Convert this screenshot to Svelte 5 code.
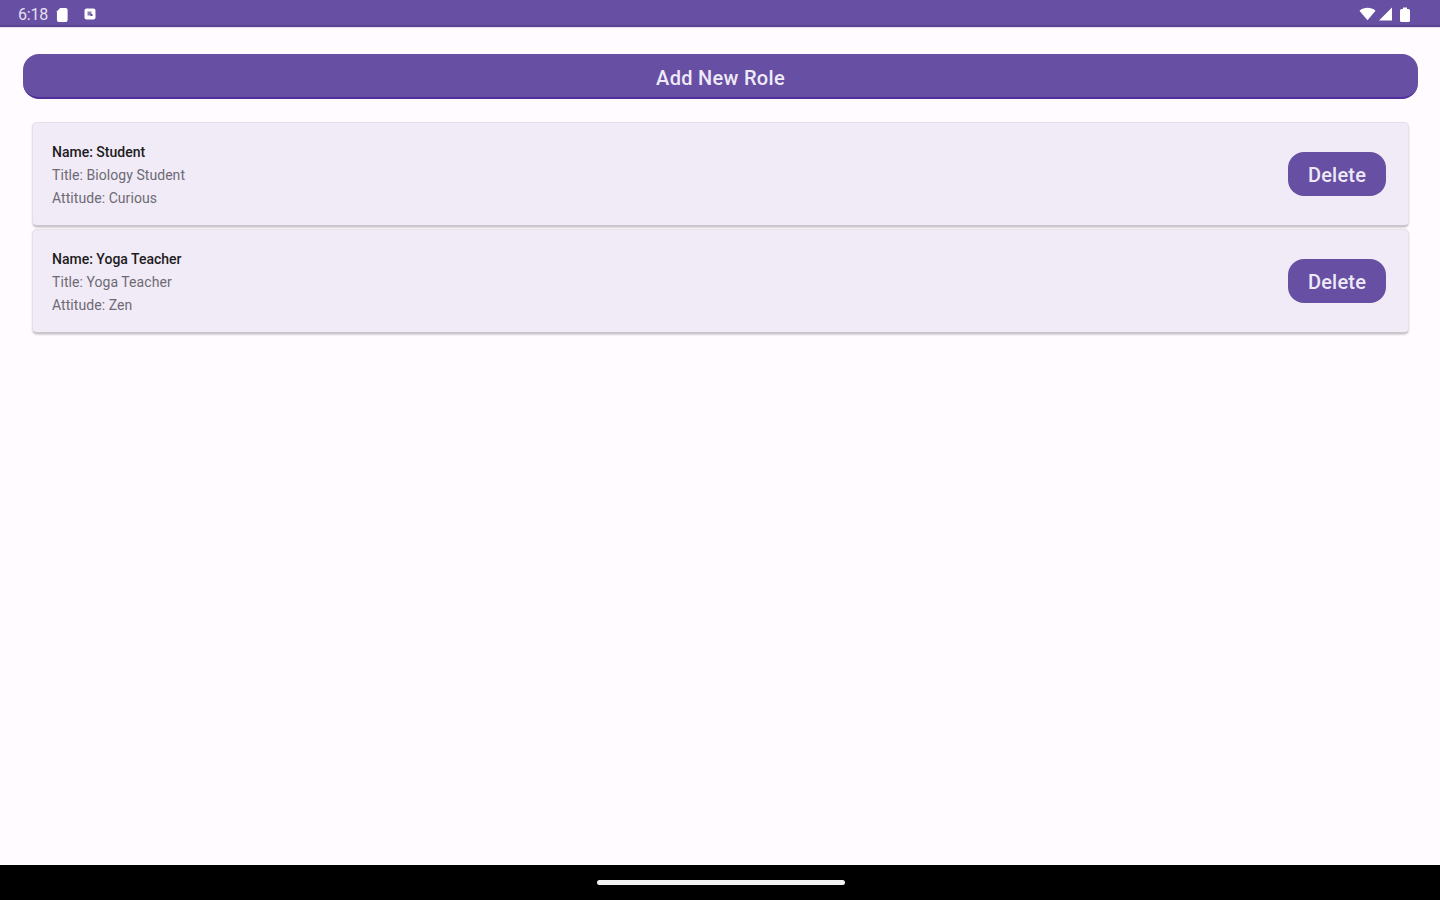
<script lang="ts">
  const roles = [
    { name: 'Student', title: 'Biology Student', attitude: 'Curious' },
    { name: 'Yoga Teacher', title: 'Yoga Teacher', attitude: 'Zen' },
  ]
</script>

<div class="screen">
  <header class="status-bar">
    <div class="status-left">
      <span class="time">6:18</span>
      <svg class="sd" width="13" height="15" viewBox="0 0 14 16">
        <path d="M4.500 1h6a2 2 0 0 1 2 2v11a2 2 0 0 1-2 2h-7.500a2 2 0 0 1-2-2V4.500z" fill="#fff" />
      </svg>
      <svg class="notif" width="12" height="12" viewBox="0 0 12 12">
        <rect x="0.500" y="0.500" width="11" height="11" rx="2" fill="#fff" />
        <rect x="3.500" y="3.500" width="4" height="4" fill="#8d7cb8" />
        <rect x="6.500" y="6" width="2" height="2" fill="#5e4a96" />
      </svg>
    </div>
    <div class="status-right">
      <svg width="17" height="14" viewBox="0 0 18 14">
        <path d="M0.500 3.500C3 1.500 6 0.500 9 0.500s6 1 8.500 3L9 13.500z" fill="#fff" />
      </svg>
      <svg width="15" height="14" viewBox="0 0 14 14">
        <path d="M13.500 0.500V13.500H0.500z" fill="#fff" />
      </svg>
      <svg class="battery" width="10" height="15" viewBox="0 0 10 15">
        <path d="M3 0.500h4v1.500h1.500a1.500 1.500 0 0 1 1.500 1.500v10a1.500 1.500 0 0 1-1.500 1.500h-7a1.500 1.500 0 0 1-1.500-1.500v-10a1.500 1.500 0 0 1 1.500-1.500H3z" fill="#fff" />
      </svg>
    </div>
  </header>

  <main class="content">
    <button class="add-btn">Add New Role</button>

    <div class="role-list">
      {#each roles as role (role.name)}
        <div class="role-card">
          <div class="role-info">
            <div class="role-name">Name: {role.name}</div>
            <div class="role-line">Title: {role.title}</div>
            <div class="role-line">Attitude: {role.attitude}</div>
          </div>
          <button class="delete-btn">Delete</button>
        </div>
      {/each}
    </div>
  </main>

  <footer class="nav-bar">
    <div class="home-pill"></div>
  </footer>
</div>

<style>
  :global(body) {
    margin: 0;
    background: #fffbff;
  }

  .screen {
    display: flex;
    flex-direction: column;
    width: 1440px;
    height: 900px;
    overflow: hidden;
    background: #fffbff;
    font-family: Roboto, "Liberation Sans", sans-serif;
  }

  .status-bar {
    display: flex;
    align-items: center;
    justify-content: space-between;
    box-sizing: border-box;
    height: 27px;
    flex-shrink: 0;
    padding: 3px 30px 0 18px;
    background: #674fa3;
    border-bottom: 2px solid #5a4595;
    box-shadow: 0 1px 1px #e4e0ec;
  }

  .status-left,
  .status-right {
    display: flex;
    align-items: center;
  }

  .time {
    color: #e6e0f0;
    font-size: 16px;
    letter-spacing: -0.2px;
    margin-right: 8px;
  }

  .notif {
    margin-left: 15px;
  }

  .status-right {
    gap: 2px;
  }

  .battery {
    margin-left: 5px;
  }

  .content {
    flex: 1;
    display: flex;
    flex-direction: column;
    padding: 27px 22px 0 23px;
  }

  .add-btn {
    height: 45px;
    flex-shrink: 0;
    border: 0;
    border-bottom: 2px solid #4f2f9c;
    border-radius: 16px;
    background: #674fa3;
    color: #efeaf7;
    font-family: inherit;
    font-size: 20px;
    font-weight: 500;
    letter-spacing: 0.3px;
    padding: 4px 0 0;
  }

  .role-list {
    display: flex;
    flex-direction: column;
    gap: 2px;
    margin: 23px 9px 0;
  }

  .role-card {
    display: flex;
    align-items: center;
    justify-content: space-between;
    box-sizing: border-box;
    height: 105px;
    padding: 0 22px 0 19px;
    background: #f0ebf6;
    border-radius: 5px;
    border: 1px solid #e4e0ea;
    border-bottom: 2px solid #c9c6cd;
    box-shadow: 0 1px 2px rgba(0, 0, 0, 0.16);
  }

  .role-info {
    display: flex;
    flex-direction: column;
    gap: 6px;
    padding-top: 2px;
    font-size: 14px;
    line-height: 17px;
  }

  .role-name {
    color: #1e1b22;
    font-weight: 500;
  }

  .role-line {
    color: #6e6a74;
    letter-spacing: 0.06px;
  }

  .delete-btn {
    width: 98px;
    height: 44px;
    border: 0;
    border-radius: 16px;
    background: #674fa3;
    color: #eee9f6;
    font-family: inherit;
    font-size: 20px;
    font-weight: 500;
    letter-spacing: 0.2px;
    padding: 2px 0 0;
  }

  .nav-bar {
    display: flex;
    align-items: flex-start;
    justify-content: center;
    box-sizing: border-box;
    height: 35px;
    flex-shrink: 0;
    padding: 15px 0 0 2px;
    background: #000;
  }

  .home-pill {
    width: 248px;
    height: 5px;
    border-radius: 3px;
    background: #f2f2f2;
  }
</style>
